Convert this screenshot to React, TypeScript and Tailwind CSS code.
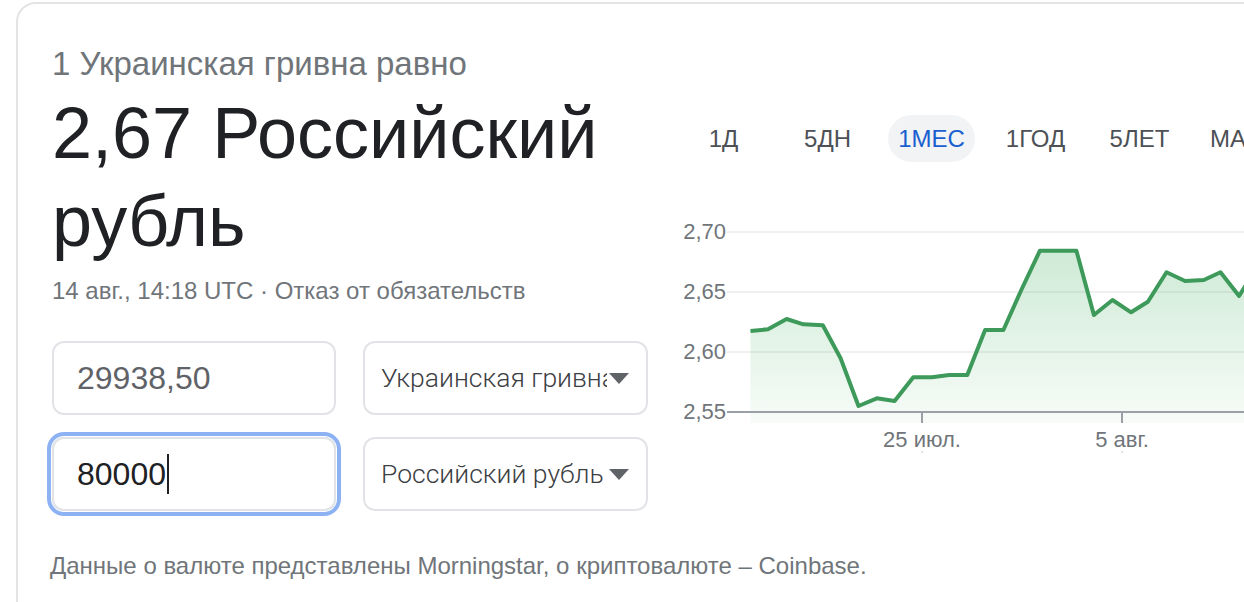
import React from 'react';

const points: [number, number][] = [
  [70.5, 131], [88, 129.3], [106.6, 119], [123.4, 124.3], [142.8, 125.3],
  [160.6, 158.3], [178.5, 206], [196.8, 198.3], [214.6, 201], [233.3, 177.3],
  [251.9, 177.3], [269, 175], [287.3, 175], [305.1, 130], [323.4, 130],
  [341.3, 90], [359.9, 50.7], [378.5, 50.7], [396.4, 50.7], [413.9, 115],
  [432.5, 100], [451.1, 112.3], [467.9, 101.7], [486.5, 72.3], [505.1, 81],
  [523.8, 80], [540.5, 72.3], [559.1, 96], [575, 70], [600, 60],
];

const tabs = ['1Д', '5ДН', '1МЕС', '1ГОД', '5ЛЕТ', 'МАКС'];

const Arrow = () => (
  <svg width="20" height="11" viewBox="0 0 20 11" className="shrink-0">
    <polygon points="0,0 20,0 10,11" fill="#5f6368" />
  </svg>
);

const Chart = () => {
  const line = points.map(([x, y]) => `${x},${y}`).join(' ');
  const area = `70.5,223 ${line} 600,223`;
  const grid = [
    { y: 32, label: '2,70' },
    { y: 92, label: '2,65' },
    { y: 152, label: '2,60' },
  ];

  return (
    <svg width="600" height="270" viewBox="0 0 600 270" className="block">
      <defs>
        <linearGradient id="fill" x1="0" y1="0" x2="0" y2="1">
          <stop offset="0%" stopColor="#34a853" stopOpacity="0.24" />
          <stop offset="100%" stopColor="#34a853" stopOpacity="0.04" />
        </linearGradient>
      </defs>
      {grid.map((g) => (
        <g key={g.label}>
          <line x1="47" x2="600" y1={g.y} y2={g.y} stroke="#f0f0f0" strokeWidth="2" />
          <text
            x="46"
            y={g.y + 7}
            textAnchor="end"
            fontSize="22"
            fill="#70757a"
            fontFamily="'Liberation Sans', Arial, sans-serif"
          >
            {g.label}
          </text>
        </g>
      ))}
      <polygon points={area} fill="url(#fill)" />
      <polyline
        points={line}
        fill="none"
        stroke="#3e9a5a"
        strokeWidth="4"
        strokeLinejoin="round"
      />
      <line x1="47" x2="600" y1="212" y2="212" stroke="#9aa0a6" strokeWidth="2" />
      <text
        x="46"
        y="219"
        textAnchor="end"
        fontSize="22"
        fill="#70757a"
        fontFamily="'Liberation Sans', Arial, sans-serif"
      >
        2,55
      </text>
      {[
        { x: 242, label: '25 июл.' },
        { x: 442, label: '5 авг.' },
      ].map((t) => (
        <g key={t.label}>
          <line x1={t.x} x2={t.x} y1="212" y2="223" stroke="#9aa0a6" strokeWidth="2" />
          <line x1={t.x} x2={t.x} y1="251" y2="253" stroke="#c8c8c8" strokeWidth="1" />
          <text
            x={t.x}
            y="247"
            textAnchor="middle"
            fontSize="22"
            fill="#70757a"
            fontFamily="'Liberation Sans', Arial, sans-serif"
          >
            {t.label}
          </text>
        </g>
      ))}
    </svg>
  );
};

const App = () => {
  return (
    <div className="w-[1244px] h-[602px] overflow-hidden bg-white font-['Liberation_Sans',Arial,sans-serif]">
      <div className="ml-[16px] mt-[2px] w-[1400px] h-[700px] border-2 border-[#e4e4e4] rounded-[20px] flex pl-[34px] pt-[42px]">
        {/* Left: converter */}
        <div className="w-[598px] shrink-0 flex flex-col">
          <p className="text-[33px] leading-[36px] text-[#70757a]">
            1 Украинская гривна равно
          </p>
          <p className="mt-[7px] text-[72px] leading-[88px] text-[#202124]">
            2,67 Российский рубль
          </p>
          <p className="mt-[10px] text-[24px] leading-[32px] text-[#70757a]">
            14 авг., 14:18 UTC · Отказ от обязательств
          </p>

          <div className="mt-[34px] grid grid-cols-[284px_285px] gap-x-[27px] gap-y-[22px]">
            <div className="h-[74px] border-2 border-[#e1e3e6] rounded-[12px] pl-[23px] flex items-center text-[32px] text-[#5f6368]">
              29938,50
            </div>
            <div className="h-[74px] border-2 border-[#e1e3e6] rounded-[12px] pl-[16px] pr-[17px] flex items-center gap-[2px]">
              <span className="flex-1 overflow-hidden whitespace-nowrap font-['Roboto',sans-serif] font-light text-[26.5px] text-[#3c4043]">
                Украинская гривна
              </span>
              <Arrow />
            </div>
            <div className="h-[74px] border-2 border-[#e1e3e6] rounded-[12px] pl-[23px] flex items-center text-[32px] text-[#202124] shadow-[0_0_0_1px_#ffffff,0_0_0_5px_#8cb2f4]">
              80000
              <span className="ml-[1px] w-[2px] h-[40px] bg-[#202124]" />
            </div>
            <div className="h-[74px] border-2 border-[#e1e3e6] rounded-[12px] pl-[16px] pr-[17px] flex items-center gap-[2px]">
              <span className="flex-1 overflow-hidden whitespace-nowrap font-['Roboto',sans-serif] font-light text-[26.5px] text-[#3c4043]">
                Российский рубль
              </span>
              <Arrow />
            </div>
          </div>

          <p className="mt-[39px] -ml-[2px] text-[24px] leading-[32px] text-[#70757a] whitespace-nowrap">
            Данные о валюте представлены Morningstar, о криптовалюте – Coinbase.
          </p>
        </div>

        {/* Right: chart */}
        <div className="ml-[30px] flex flex-col">
          <div className="mt-[69px] flex gap-[17px]">
            {tabs.map((tab) => (
              <button
                key={tab}
                className={
                  tab === '1МЕС'
                    ? 'h-[47px] w-[87px] rounded-full bg-[#f1f3f4] text-[24px] text-[#1a5fd0] flex items-center justify-center'
                    : 'h-[47px] w-[87px] rounded-full text-[24px] text-[#4d5156] flex items-center justify-center'
                }
              >
                {tab}
              </button>
            ))}
          </div>
          <div className="mt-[38px]">
            <Chart />
          </div>
        </div>
      </div>
    </div>
  );
};

export default App;
